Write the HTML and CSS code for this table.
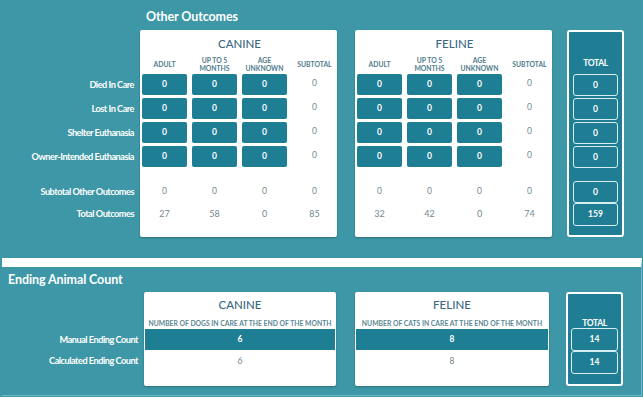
FILE: index.html
```html
<!DOCTYPE html>
<html>
<head>
<meta charset="utf-8">
<link rel="stylesheet" href="styles.css">
</head>
<body>
<div class="page">
  <section class="outcomes">
    <h2 class="title title-outcomes">Other Outcomes</h2>
    <div class="board">
      <div class="labels">
        <div class="lbl row">Died In Care</div>
        <div class="lbl row">Lost In Care</div>
        <div class="lbl row">Shelter Euthanasia</div>
        <div class="lbl row">Owner-Intended Euthanasia</div>
        <div class="lbl sub">Subtotal Other Outcomes</div>
        <div class="lbl tot">Total Outcomes</div>
      </div>

      <div class="card card-canine">
        <div class="card-head">CANINE</div>
        <div class="colheads">
          <div>ADULT</div><div>UP TO 5<br>MONTHS</div><div>AGE<br>UNKNOWN</div><div>SUBTOTAL</div>
        </div>
        <div class="cells">
          <div class="in">0</div><div class="in">0</div><div class="in">0</div><div class="val">0</div>
          <div class="in">0</div><div class="in">0</div><div class="in">0</div><div class="val">0</div>
          <div class="in">0</div><div class="in">0</div><div class="in">0</div><div class="val">0</div>
          <div class="in">0</div><div class="in">0</div><div class="in">0</div><div class="val">0</div>
        </div>
        <div class="sums">
          <div class="val">0</div><div class="val">0</div><div class="val">0</div><div class="val">0</div>
          <div class="val t">27</div><div class="val t">58</div><div class="val t">0</div><div class="val t">85</div>
        </div>
      </div>

      <div class="card card-feline">
        <div class="card-head">FELINE</div>
        <div class="colheads">
          <div>ADULT</div><div>UP TO 5<br>MONTHS</div><div>AGE<br>UNKNOWN</div><div>SUBTOTAL</div>
        </div>
        <div class="cells">
          <div class="in">0</div><div class="in">0</div><div class="in">0</div><div class="val">0</div>
          <div class="in">0</div><div class="in">0</div><div class="in">0</div><div class="val">0</div>
          <div class="in">0</div><div class="in">0</div><div class="in">0</div><div class="val">0</div>
          <div class="in">0</div><div class="in">0</div><div class="in">0</div><div class="val">0</div>
        </div>
        <div class="sums">
          <div class="val">0</div><div class="val">0</div><div class="val">0</div><div class="val">0</div>
          <div class="val t">32</div><div class="val t">42</div><div class="val t">0</div><div class="val t">74</div>
        </div>
      </div>

      <div class="total">
        <div class="total-head">TOTAL</div>
        <div class="total-cells">
          <div class="tbox">0</div>
          <div class="tbox">0</div>
          <div class="tbox">0</div>
          <div class="tbox">0</div>
        </div>
        <div class="total-sums">
          <div class="tbox">0</div>
          <div class="tbox">159</div>
        </div>
      </div>
    </div>
  </section>

  <section class="ending">
    <h2 class="title title-ending">Ending Animal Count</h2>
    <div class="board2">
      <div class="labels2">
        <div class="lbl r1">Manual Ending Count</div>
        <div class="lbl r2">Calculated Ending Count</div>
      </div>
      <div class="card2 c2-canine">
        <div class="card-head">CANINE</div>
        <div class="subhead">NUMBER OF DOGS IN CARE AT THE END OF THE MONTH</div>
        <div class="bar">6</div>
        <div class="calc">6</div>
      </div>
      <div class="card2 c2-feline">
        <div class="card-head">FELINE</div>
        <div class="subhead">NUMBER OF CATS IN CARE AT THE END OF THE MONTH</div>
        <div class="bar">8</div>
        <div class="calc">8</div>
      </div>
      <div class="total2">
        <div class="total2-head">TOTAL</div>
        <div class="tbox2">14</div>
        <div class="tbox2">14</div>
      </div>
    </div>
  </section>
</div>
</body>
</html>
```

FILE: styles.css
```css
* { box-sizing: border-box; }
html, body { margin: 0; padding: 0; }
body {
  width: 643px;
  height: 397px;
  overflow: hidden;
  background: #3d97a6;
  font-family: Lato, "Open Sans", sans-serif;
  color: #fff;
}
.page { width: 643px; }

.title {
  margin: 0;
  font-size: 12.5px;
  font-weight: 700;
  color: #fff;
  line-height: 16px;
  letter-spacing: -0.1px;
}
.outcomes { padding-top: 9px; }
.title-outcomes { margin-left: 146px; height: 21px; }

.board { display: flex; align-items: flex-start; }

.lbl {
  font-size: 9.2px;
  font-weight: 700;
  letter-spacing: -0.5px;
  color: #fff;
  text-align: right;
  white-space: nowrap;
}
.labels {
  width: 134px;
  padding-top: 44px;
  display: flex;
  flex-direction: column;
}
.labels .row { height: 21px; line-height: 21px; margin-bottom: 3px; }
.labels .row:nth-child(4) { margin-bottom: 14px; }
.labels .sub { height: 21px; line-height: 21px; }
.labels .tot { height: 22px; line-height: 22px; margin-top: 1px; }

.card {
  width: 197px;
  height: 207px;
  background: #fff;
  border-radius: 2px;
  box-shadow: 0 1px 2px rgba(0, 0, 0, 0.25);
  padding: 0 0 0 2px;
}
.card-canine { margin-left: 6px; }
.card-feline { margin-left: 18px; }

.card-head {
  height: 24px;
  line-height: 27px;
  text-align: center;
  font-size: 11.5px;
  font-weight: 500;
  color: #3a6a82;
}
.colheads {
  height: 20px;
  display: grid;
  grid-template-columns: repeat(4, 45px);
  column-gap: 5px;
  align-items: center;
  padding-top: 1px;
  text-align: center;
  font-size: 6.8px;
  font-weight: 700;
  line-height: 7.5px;
  color: #4f7c8c;
}
.cells {
  display: grid;
  grid-template-columns: repeat(4, 45px);
  grid-auto-rows: 21px;
  gap: 3px 5px;
}
.in {
  background: #1e7e94;
  border-radius: 2px;
  color: #fff;
  font-size: 8.5px;
  font-weight: 700;
  text-align: center;
  line-height: 21px;
}
.val {
  text-align: center;
  font-size: 8.5px;
  color: #72878f;
  line-height: 18px;
}
.sums {
  margin-top: 14px;
  display: grid;
  grid-template-columns: repeat(4, 45px);
  grid-template-rows: 21px 22px;
  column-gap: 5px;
  row-gap: 1px;
}
.sums .val { line-height: 20px; }
.sums .t { line-height: 22px; font-size: 9px; }

.total {
  margin-left: 15px;
  width: 57px;
  height: 207px;
  border: 2px solid #fff;
  border-radius: 3px;
  background: #1f7e94;
  padding: 0 4px;
}
.total-head {
  height: 42px;
  padding-top: 26px;
  text-align: center;
  font-size: 8.5px;
  font-weight: 700;
  letter-spacing: -0.4px;
  line-height: 10px;
}
.total-cells { display: flex; flex-direction: column; gap: 2px; }
.tbox {
  height: 22px;
  border: 1px solid #d9eef2;
  border-radius: 3px;
  text-align: center;
  line-height: 20px;
  font-size: 8.5px;
  font-weight: 700;
  color: #fff;
}
.total-sums { margin-top: 13px; display: flex; flex-direction: column; }
.total-sums .tbox + .tbox { height: 23px; }

/* Ending section */
.ending {
  margin: 21px 1px 0 2px;
  height: 138px;
  border-top: 9px solid #fff;
  border-right: 1px solid #74b6c1;
  border-bottom: 1px solid #74b6c1;
  padding-top: 5px;
}
.title-ending { margin-left: 6px; height: 20px; }

.board2 { display: flex; align-items: flex-start; }
.labels2 {
  width: 136px;
  padding-top: 37px;
  display: flex;
  flex-direction: column;
}
.labels2 .r1 { height: 21px; line-height: 21px; }
.labels2 .r2 { height: 22px; line-height: 22px; }

.card2 {
  height: 94px;
  background: #fff;
  border-radius: 2px;
  box-shadow: 0 1px 2px rgba(0, 0, 0, 0.25);
  padding: 0 1px;
}
.c2-canine { width: 192px; margin-left: 6px; }
.c2-feline { width: 194px; margin-left: 19px; }
.card2 .card-head { height: 24px; line-height: 26px; }
.subhead {
  height: 13px;
  line-height: 14px;
  text-align: center;
  font-size: 6.8px;
  font-weight: 700;
  color: #5a8794;
  white-space: nowrap;
}
.bar {
  height: 21px;
  background: #1e7e94;
  text-align: center;
  line-height: 21px;
  font-size: 8.5px;
  font-weight: 700;
  color: #fff;
}
.calc {
  height: 22px;
  line-height: 22px;
  text-align: center;
  font-size: 8.5px;
  color: #72878f;
}

.total2 {
  margin-left: 17px;
  width: 57px;
  height: 94px;
  border: 2px solid #fff;
  border-radius: 3px;
  background: #1f7e94;
  padding: 0 3px;
}
.total2-head {
  height: 34px;
  padding-top: 24px;
  line-height: 10px;
  text-align: center;
  font-size: 8.5px;
  font-weight: 700;
  letter-spacing: -0.4px;
}
.tbox2 {
  height: 23px;
  border: 1px solid #d9eef2;
  border-radius: 3px;
  text-align: center;
  line-height: 21px;
  font-size: 8.5px;
  font-weight: 700;
  color: #fff;
}
```
